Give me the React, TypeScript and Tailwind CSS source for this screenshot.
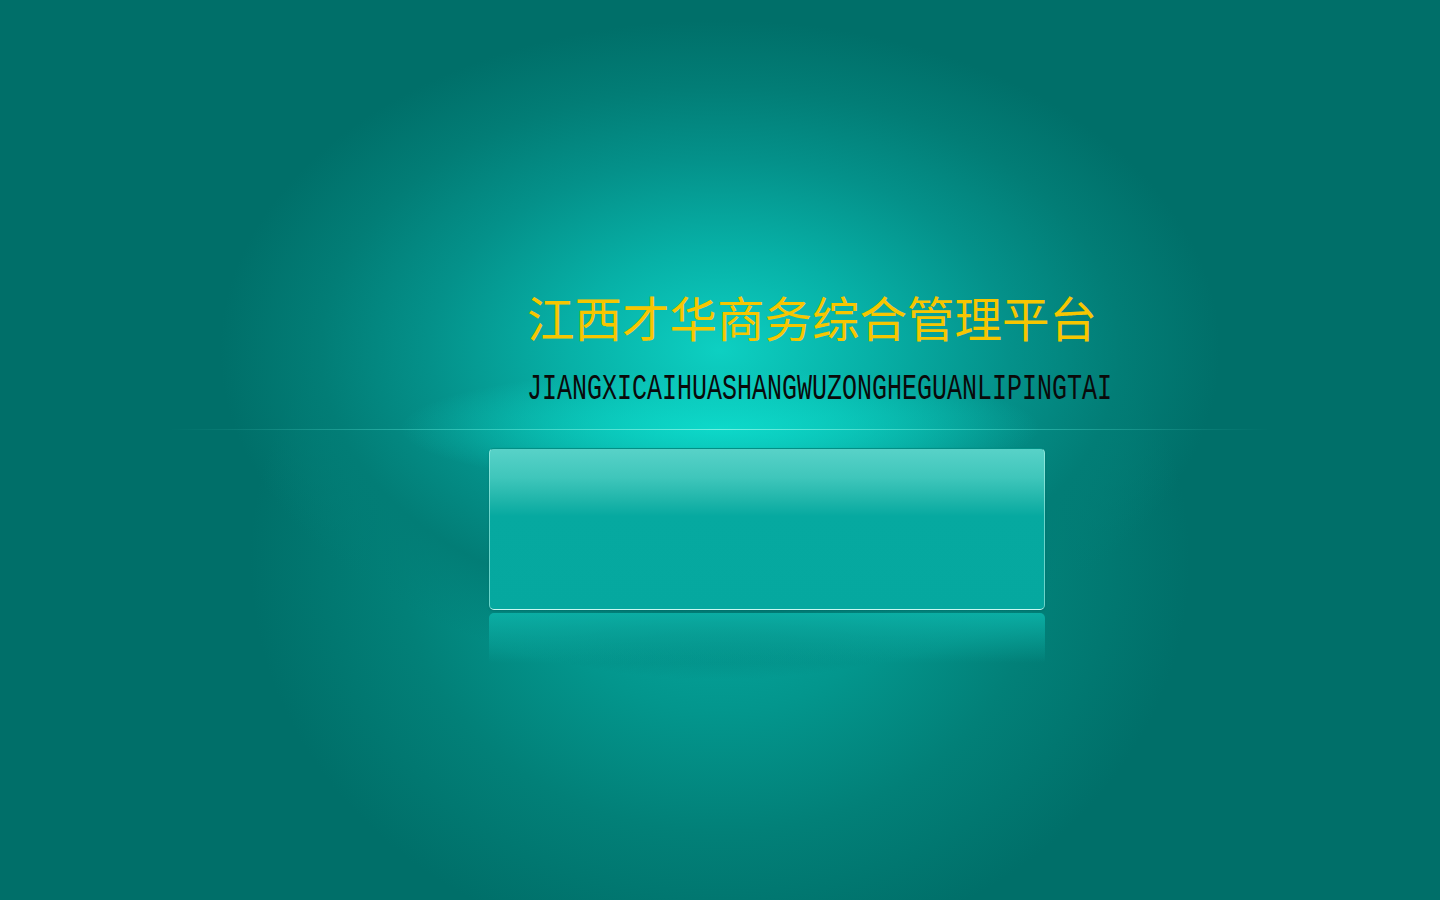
export default function App() {
  return (
    <div className="relative h-[900px] w-full overflow-hidden bg-[#006f69] bg-[radial-gradient(ellipse_320px_60px_at_720px_428px,rgba(14,222,206,0.85),rgba(14,222,206,0)),radial-gradient(ellipse_500px_330px_at_720px_350px,#0dd0c2_0%,#07b1a7_30%,#04918a_58%,#027d76_80%,rgba(0,111,105,0)_100%),radial-gradient(ellipse_470px_400px_at_720px_560px,#05aba2_0%,#03968d_38%,#028078_68%,rgba(0,111,105,0)_100%)]">
      {/* title */}
      <div className="pl-[527px] pt-[293px]">
        <h1 className="text-[47.5px] leading-none text-[#f7c600] [font-family:'Noto_Sans_CJK_SC',sans-serif] font-normal">
          江西才华商务综合管理平台
        </h1>
        <p className="mt-[30px] origin-top scale-y-[1.45] text-[25px] leading-none text-[#0a0a0a] [font-family:'Liberation_Mono',monospace]">
          JIANGXICAIHUASHANGWUZONGHEGUANLIPINGTAI
        </p>
      </div>

      {/* horizon line */}
      <div className="mx-[170px] mt-[33px] h-px bg-[linear-gradient(90deg,rgba(90,230,215,0),rgba(90,230,215,0.55)_30%,rgba(140,245,232,0.8)_50%,rgba(90,230,215,0.55)_70%,rgba(90,230,215,0))]" />

      {/* glass panel */}
      <div className="ml-[489px] mt-[18px] w-[556px]">
        <div className="h-[162px] rounded-[5px] border-x border-b border-t border-x-[rgba(190,250,240,0.55)] border-b-[rgba(220,255,250,0.85)] border-t-[rgba(0,120,110,0.5)] bg-[linear-gradient(180deg,#58d2c8_0%,#3fc6bb_18%,#1fb5aa_32%,#06a9a0_42%,#05a89f_100%)] shadow-[0_1px_2px_rgba(0,90,85,0.4)]" />
        <div className="mt-[3px] h-[50px] rounded-t-[5px] bg-[linear-gradient(180deg,rgba(12,178,168,0.9),rgba(5,170,160,0))]" />
      </div>
    </div>
  );
}
